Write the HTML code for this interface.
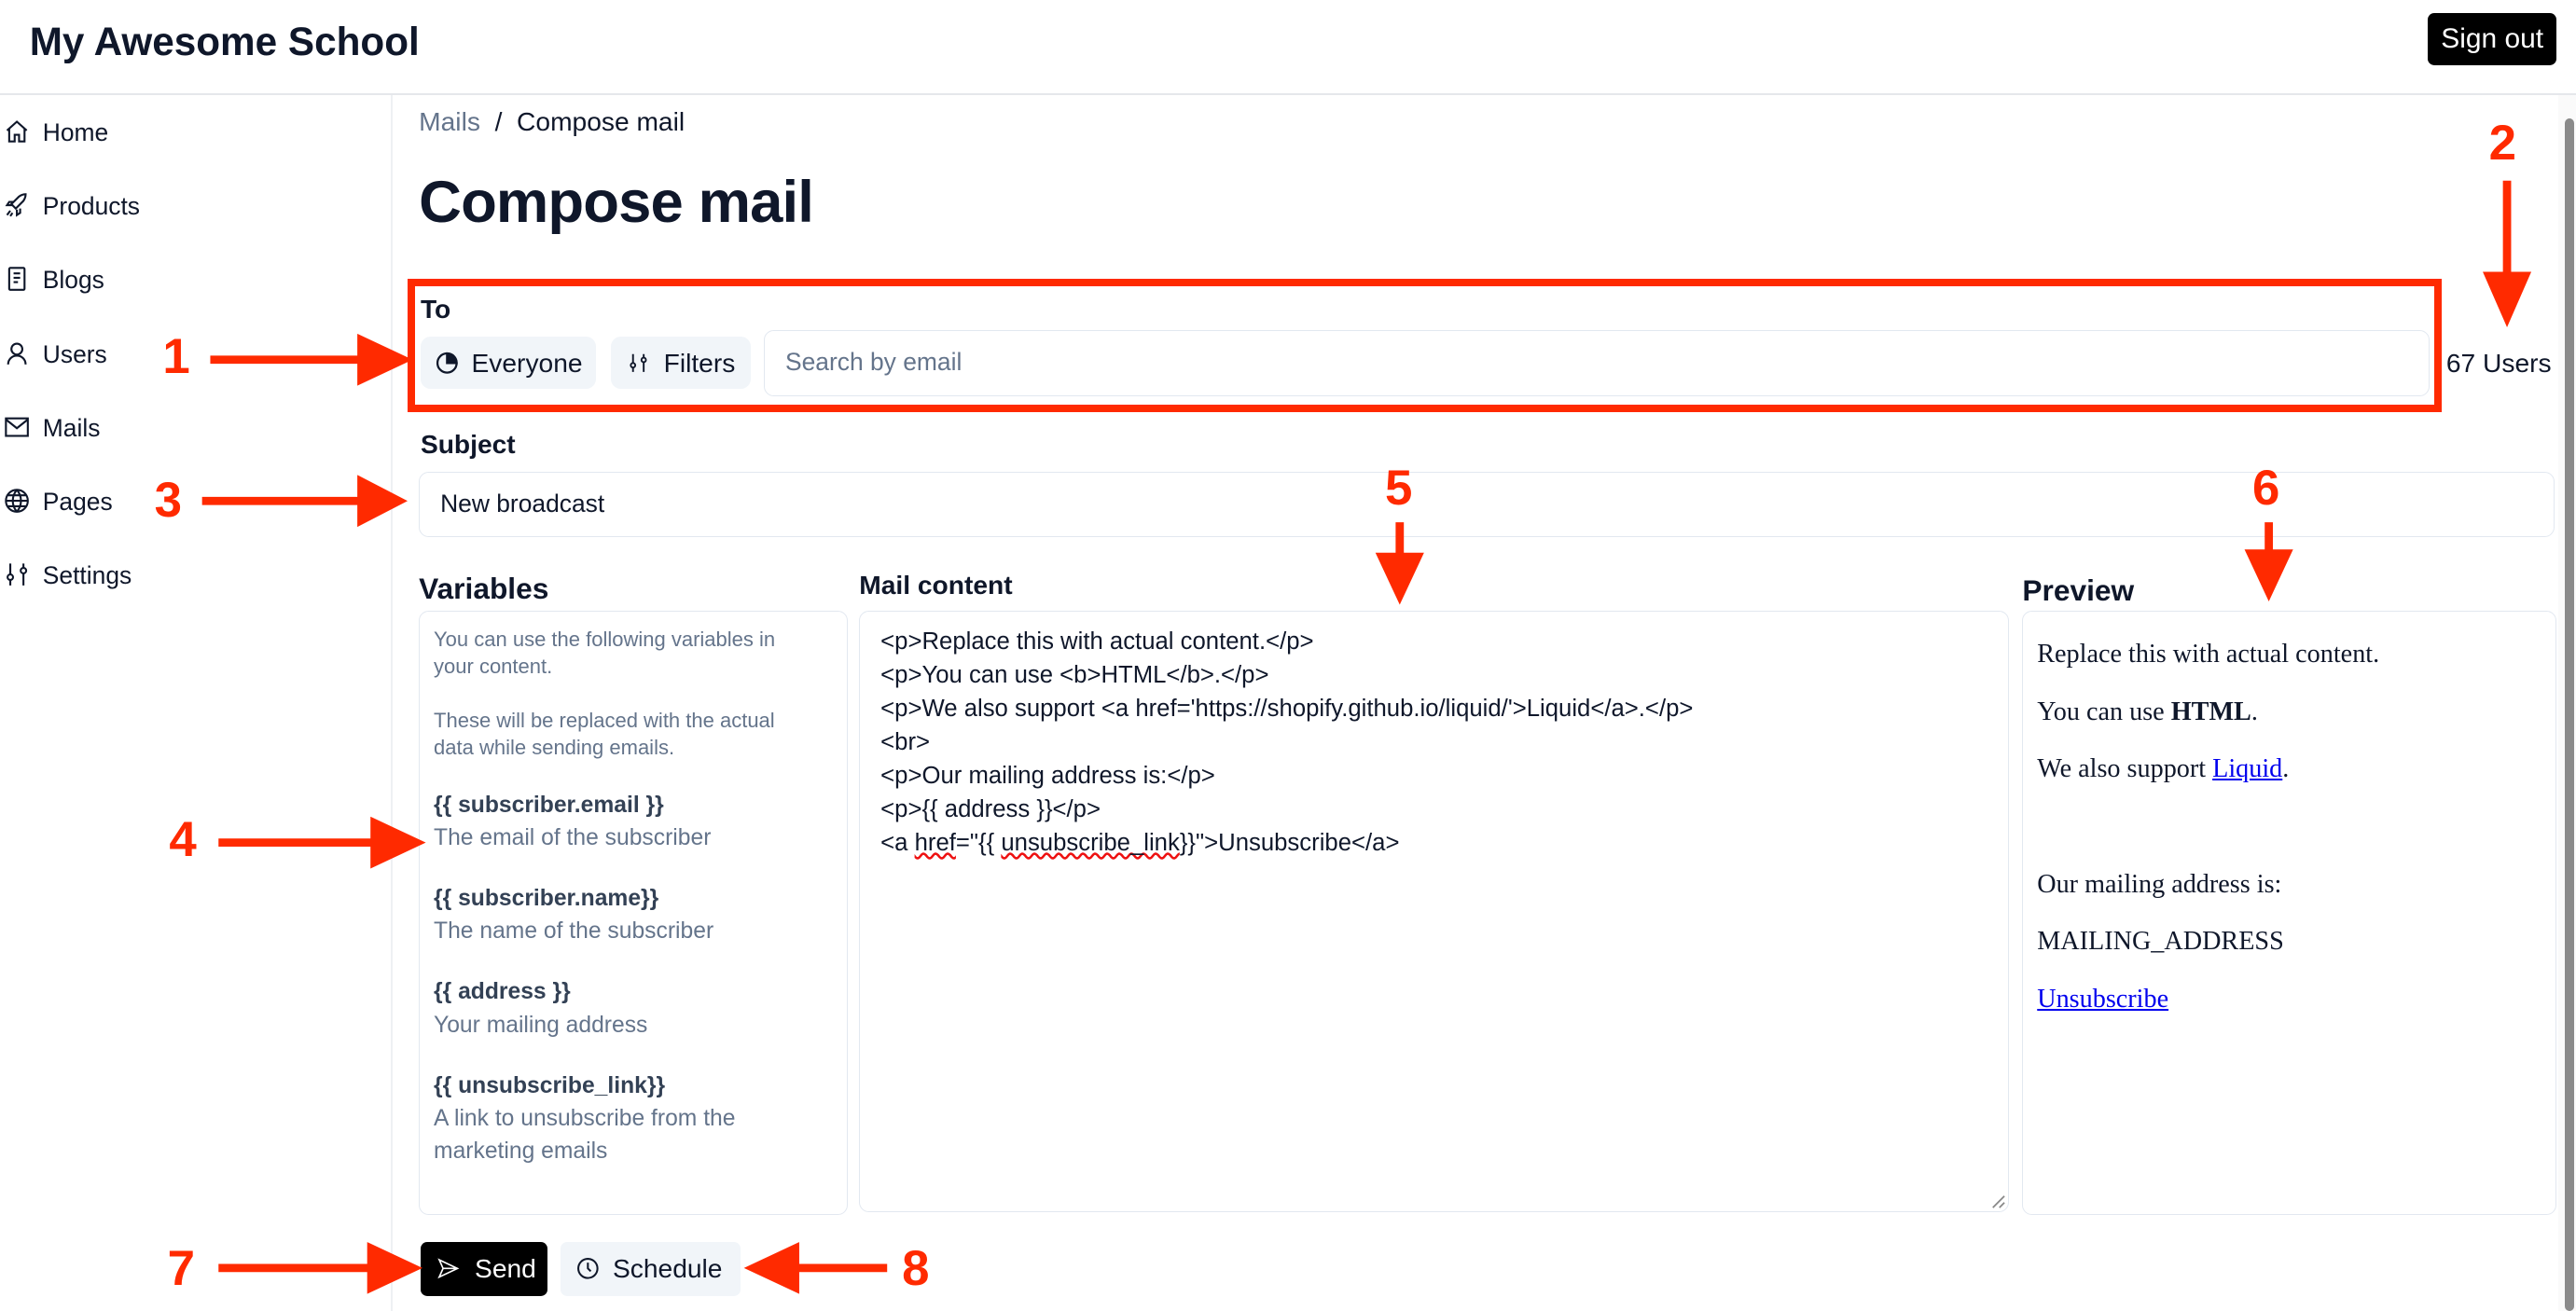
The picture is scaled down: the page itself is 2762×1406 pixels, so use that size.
<!DOCTYPE html>
<html><head><meta charset="utf-8"><style>
html,body{margin:0;padding:0;background:#fff;overflow:hidden}
body{width:2762px;height:1405px}
#w{position:absolute;left:0;top:0;width:1568px;height:798px;zoom:1.7615;font-family:"Liberation Sans",sans-serif;color:#0f172a}
.a{position:absolute;white-space:nowrap}
.btn{position:absolute;background:#f1f5f9;border-radius:6px;font-size:16px;display:flex;align-items:center;box-sizing:border-box}
.box{position:absolute;border:1px solid #e2e8f0;border-radius:6px;box-sizing:border-box;background:#fff}
.nav{position:absolute;left:26px;font-size:15px;color:#0f172a}
.ic{position:absolute;left:2px}
.n{position:absolute;color:#ff2a00;font-weight:bold;font-size:30px}
.vt{font-weight:bold;color:#334155;font-size:14px}
.vd{color:#64748b;font-size:14px}
</style></head><body><div id="w">
<div class="a" style="left:18px;top:12px;font-size:24px;font-weight:bold">My Awesome School</div>
<div class="a" style="left:1478px;top:8px;width:78px;height:32px;background:#000;color:#fff;border-radius:4px;font-size:17px;text-align:center;line-height:32px">Sign out</div>
<div class="a" style="left:0;top:57px;width:1568px;height:1px;background:#e5e7eb"></div>
<div class="a" style="left:238px;top:58px;width:1px;height:740px;background:#eef0f3"></div>
<div class="a" style="left:1557px;top:58px;width:11px;height:740px;background:#fafafa"></div>
<div class="a" style="left:1561px;top:72px;width:6px;height:726px;background:#8a8a8a;border-radius:3px"></div>
<svg class="ic" style="top:72px" width="16" height="16" viewBox="0 0 24 24" fill="none" stroke="#0f172a" stroke-width="1.8"><path d="M3 11l9-8 9 8M5 9v12h5v-6h4v6h5V9"/></svg>
<div class="nav" style="top:72px">Home</div>
<svg class="ic" style="top:117px" width="16" height="16" viewBox="0 0 24 24" fill="none" stroke="#0f172a" stroke-width="1.8"><path d="M14 4c3-2 6-2 6-2s0 3-2 6l-7 7-4-4zM9 9H5l-2 3h5M15 15v4l-3 2v-5M6 17l-3 4M8 19l-2 3"/></svg>
<div class="nav" style="top:117px">Products</div>
<svg class="ic" style="top:162px" width="16" height="16" viewBox="0 0 24 24" fill="none" stroke="#0f172a" stroke-width="1.8"><rect x="5" y="2" width="14" height="20" rx="1"/><path d="M9 7h6M9 11h6M9 15h4"/></svg>
<div class="nav" style="top:162px">Blogs</div>
<svg class="ic" style="top:207px" width="16" height="16" viewBox="0 0 24 24" fill="none" stroke="#0f172a" stroke-width="1.8"><circle cx="12" cy="8" r="5"/><path d="M4 22c0-5 4-8 8-8s8 3 8 8"/></svg>
<div class="nav" style="top:207px">Users</div>
<svg class="ic" style="top:252px" width="16" height="16" viewBox="0 0 24 24" fill="none" stroke="#0f172a" stroke-width="1.8"><rect x="2" y="4" width="20" height="16"/><path d="M2 5l10 8 10-8"/></svg>
<div class="nav" style="top:252px">Mails</div>
<svg class="ic" style="top:297px" width="16" height="16" viewBox="0 0 24 24" fill="none" stroke="#0f172a" stroke-width="1.8"><circle cx="12" cy="12" r="10"/><path d="M2 12h20M12 2c-5 6-5 14 0 20M12 2c5 6 5 14 0 20M4 7h16M4 17h16"/></svg>
<div class="nav" style="top:297px">Pages</div>
<svg class="ic" style="top:342px" width="16" height="16" viewBox="0 0 24 24" fill="none" stroke="#0f172a" stroke-width="1.8"><path d="M6 2v10M6 17v5M18 2v4M18 11v11"/><circle cx="6" cy="14.5" r="2.5"/><circle cx="18" cy="8.5" r="2.5"/></svg>
<div class="nav" style="top:342px">Settings</div>
<div class="a" style="left:255px;top:65px;font-size:16px"><span style="color:#64748b">Mails</span>&nbsp; / &nbsp;Compose mail</div>
<div class="a" style="left:255px;top:103px;font-size:36px;font-weight:bold;letter-spacing:-0.5px">Compose mail</div>
<div class="a" style="left:248px;top:170px;width:1238px;height:81px;border:5px solid #ff2a00;box-sizing:border-box"></div>
<div class="a" style="left:256px;top:179px;font-size:16px;font-weight:bold">To</div>
<div class="btn" style="left:256px;top:205px;width:107px;height:32px;padding-left:9px"><svg width="14" height="14" viewBox="0 0 24 24" fill="none" stroke="#0f172a" stroke-width="2.2"><circle cx="12" cy="12" r="10"/><path d="M12 12V2a10 10 0 0 1 10 10z" fill="#0f172a"/></svg><span style="margin-left:8px">Everyone</span></div>
<div class="btn" style="left:372px;top:205px;width:85px;height:32px;padding-left:10px"><svg width="13" height="14" viewBox="0 0 24 24" fill="none" stroke="#0f172a" stroke-width="2"><path d="M6 2v10M6 17v5M18 2v4M18 11v11"/><circle cx="6" cy="14.5" r="2.5"/><circle cx="18" cy="8.5" r="2.5"/></svg><span style="margin-left:9px">Filters</span></div>
<div class="box" style="left:465px;top:201px;width:1014px;height:40px"></div>
<div class="a" style="left:478px;top:212px;font-size:15px;color:#64748b">Search by email</div>
<div class="a" style="left:1489px;top:212px;font-size:16px">67 Users</div>
<div class="a" style="left:256px;top:261px;font-size:16px;font-weight:bold">Subject</div>
<div class="box" style="left:255px;top:287px;width:1300px;height:40px"></div>
<div class="a" style="left:268px;top:298px;font-size:15px">New broadcast</div>
<div class="a" style="left:255px;top:348px;font-size:18px;font-weight:bold">Variables</div>
<div class="box" style="left:255px;top:372px;width:261px;height:368px"></div>
<div class="a" style="left:264px;top:381px;line-height:16.5px;font-size:12.5px;color:#64748b">You can use the following variables in<br>your content.<br><br>These will be replaced with the actual<br>data while sending emails.</div>
<div class="a" style="left:264px;top:480px;line-height:20px">
<div class="vt">{{ subscriber.email }}</div><div class="vd">The email of the subscriber</div>
<div class="vt" style="margin-top:17px">{{ subscriber.name}}</div><div class="vd">The name of the subscriber</div>
<div class="vt" style="margin-top:17px">{{ address }}</div><div class="vd">Your mailing address</div>
<div class="vt" style="margin-top:17px">{{ unsubscribe_link}}</div><div class="vd">A link to unsubscribe from the<br>marketing emails</div>
</div>
<div class="a" style="left:523px;top:347px;font-size:16px;font-weight:bold">Mail content</div>
<div class="box" style="left:523px;top:372px;width:700px;height:366px"></div>
<div class="a" style="left:536px;top:381px;font-size:14.6px;line-height:20.4px">&lt;p&gt;Replace this with actual content.&lt;/p&gt;<br>&lt;p&gt;You can use &lt;b&gt;HTML&lt;/b&gt;.&lt;/p&gt;<br>&lt;p&gt;We also support &lt;a href='https://shopify.github.io/liquid/'&gt;Liquid&lt;/a&gt;.&lt;/p&gt;<br>&lt;br&gt;<br>&lt;p&gt;Our mailing address is:&lt;/p&gt;<br>&lt;p&gt;{{ address }}&lt;/p&gt;<br>&lt;a <span style="text-decoration:underline wavy #e11;">href</span>="{{ <span style="text-decoration:underline wavy #e11;">unsubscribe_link</span>}}"&gt;Unsubscribe&lt;/a&gt;</div>
<svg class="a" style="left:1212px;top:727px" width="9" height="9"><path d="M1 8L8 1M5 8L8 5" stroke="#888"/></svg>
<div class="a" style="left:1231px;top:349px;font-size:18px;font-weight:bold">Preview</div>
<div class="box" style="left:1231px;top:372px;width:325px;height:368px"></div>
<div class="a" style="left:1240px;top:381px;font-family:'Liberation Serif',serif;font-size:16px;line-height:35px">Replace this with actual content.<br>You can use <b>HTML</b>.<br>We also support <span style="color:#00e;text-decoration:underline">Liquid</span>.<br><br>Our mailing address is:<br>MAILING_ADDRESS<br><span style="color:#00e;text-decoration:underline">Unsubscribe</span></div>
<div class="btn" style="left:256px;top:756px;width:77px;height:33px;background:#000;color:#fff;padding-left:9px;border-radius:4px"><svg width="15" height="14" viewBox="0 0 24 24" fill="none" stroke="#fff" stroke-width="1.6"><path d="M3 3l19 9-19 9 4-9zM7 12h15"/></svg><span style="margin-left:9px">Send</span></div>
<div class="btn" style="left:341px;top:756px;width:110px;height:33px;padding-left:10px;border-radius:4px"><svg width="14" height="14" viewBox="0 0 24 24" fill="none" stroke="#0f172a" stroke-width="2"><circle cx="12" cy="12" r="10"/><path d="M12 6v6l3 3"/></svg><span style="margin-left:8px">Schedule</span></div>
<svg class="a" style="left:0;top:0" width="1568" height="798"><g fill="#ff2a00" stroke="#ff2a00">
<path d="M128 219H222" stroke-width="5"/><path d="M218 204L250 219L218 234z"/>
<path d="M1526 110V170" stroke-width="5"/><path d="M1512 166L1526 198L1540 166z"/>
<path d="M123 305H222" stroke-width="5"/><path d="M218 290L247 305L218 320z"/>
<path d="M133 513H230" stroke-width="5"/><path d="M226 498L258 513L226 528z"/>
<path d="M852 318V342" stroke-width="5"/><path d="M838 337L852 367L866 337z"/>
<path d="M1381 318V340" stroke-width="5"/><path d="M1367 335L1381 365L1395 335z"/>
<path d="M133 772H228" stroke-width="5"/><path d="M224 757L256 772L224 787z"/>
<path d="M540 772H482" stroke-width="5"/><path d="M486 757L454 772L486 787z"/>
</g></svg>
<div class="n" style="left:99px;top:200px">1</div>
<div class="n" style="left:1515px;top:70px">2</div>
<div class="n" style="left:94px;top:287px">3</div>
<div class="n" style="left:103px;top:494px">4</div>
<div class="n" style="left:843px;top:280px">5</div>
<div class="n" style="left:1371px;top:280px">6</div>
<div class="n" style="left:102px;top:755px">7</div>
<div class="n" style="left:549px;top:755px">8</div>
</div></body></html>
